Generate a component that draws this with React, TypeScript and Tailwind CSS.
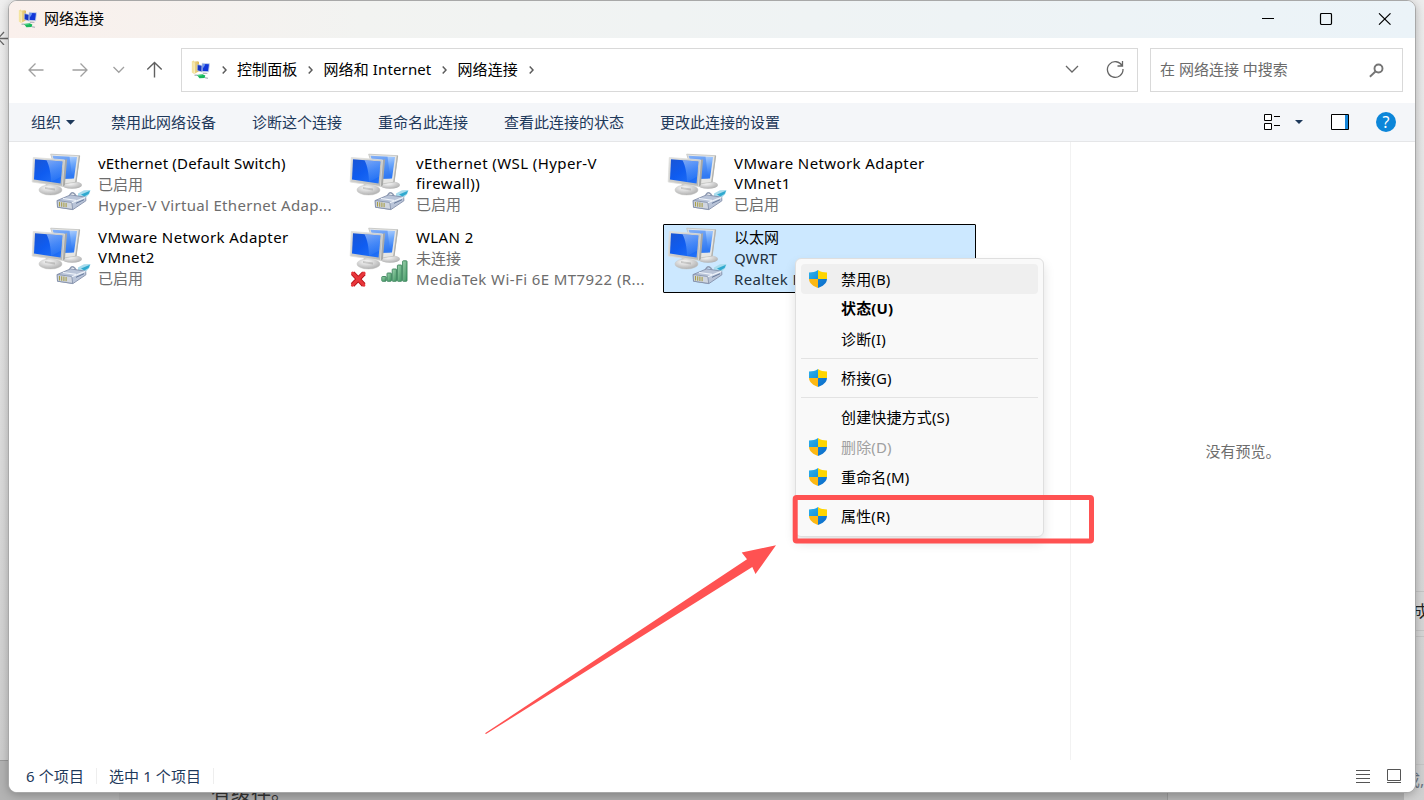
import React from 'react';
import { clsx } from 'clsx';

interface Connection {
  name: string[];
  status: string;
  device?: string;
  wireless?: boolean;
  selected?: boolean;
}

const CONNECTIONS: Connection[] = [
  { name: ['vEthernet (Default Switch)'], status: '已启用', device: 'Hyper-V Virtual Ethernet Adap...' },
  { name: ['vEthernet (WSL (Hyper-V', 'firewall))'], status: '已启用' },
  { name: ['VMware Network Adapter', 'VMnet1'], status: '已启用' },
  { name: ['VMware Network Adapter', 'VMnet2'], status: '已启用' },
  { name: ['WLAN 2'], status: '未连接', device: 'MediaTek Wi-Fi 6E MT7922 (R...', wireless: true },
  { name: ['以太网'], status: 'QWRT', device: 'Realtek P', selected: true },
];

const COMMANDS = ['禁用此网络设备', '诊断这个连接', '重命名此连接', '查看此连接的状态', '更改此连接的设置'];

const CRUMBS = ['控制面板', '网络和 Internet', '网络连接'];

interface MenuEntry {
  label: string;
  shield?: boolean;
  bold?: boolean;
  disabled?: boolean;
  hovered?: boolean;
}

const MENU_GROUPS: MenuEntry[][] = [
  [
    { label: '禁用(B)', shield: true, hovered: true },
    { label: '状态(U)', bold: true },
    { label: '诊断(I)' },
  ],
  [{ label: '桥接(G)', shield: true }],
  [
    { label: '创建快捷方式(S)' },
    { label: '删除(D)', shield: true, disabled: true },
    { label: '重命名(M)', shield: true },
  ],
  [{ label: '属性(R)', shield: true }],
];

// Shared gradients, referenced by id from every icon
const IconDefs: React.FC = () => (
  <svg className="absolute h-0 w-0" aria-hidden="true">
    <defs>
      <linearGradient id="screen" x1="0" y1="0" x2="1" y2="1">
        <stop offset="0" stopColor="#1a55d4" />
        <stop offset="0.45" stopColor="#0f5cf0" />
        <stop offset="1" stopColor="#2474f8" />
      </linearGradient>
      <linearGradient id="glare" x1="0" y1="0" x2="0.3" y2="1">
        <stop offset="0" stopColor="#d5e8ff" />
        <stop offset="0.55" stopColor="#6fa8fb" />
        <stop offset="1" stopColor="#2f7af5" />
      </linearGradient>
      <linearGradient id="bezel" x1="0" y1="0" x2="1" y2="1">
        <stop offset="0" stopColor="#e2e2e0" />
        <stop offset="1" stopColor="#b4b5b3" />
      </linearGradient>
      <radialGradient id="base" cx="0.4" cy="0.3" r="0.8">
        <stop offset="0" stopColor="#fafafa" />
        <stop offset="1" stopColor="#a6a6a6" />
      </radialGradient>
      <linearGradient id="bars" x1="0" y1="0" x2="1" y2="1">
        <stop offset="0" stopColor="#9fd3ae" />
        <stop offset="1" stopColor="#3c9460" />
      </linearGradient>
      <linearGradient id="blueTop" x1="0" y1="0" x2="1" y2="1">
        <stop offset="0" stopColor="#2fb0ec" />
        <stop offset="1" stopColor="#1493dc" />
      </linearGradient>
      <linearGradient id="blueBottom" x1="0" y1="0" x2="1" y2="1">
        <stop offset="0" stopColor="#1683d8" />
        <stop offset="1" stopColor="#0a6cc8" />
      </linearGradient>
      <linearGradient id="folder" x1="0" y1="0" x2="1" y2="0">
        <stop offset="0" stopColor="#f7e9a8" />
        <stop offset="1" stopColor="#dcb95a" />
      </linearGradient>
    </defs>
  </svg>
);

const NetworkFolderIcon: React.FC = () => (
  <svg className="h-5 w-5 shrink-0" viewBox="0 0 20 20">
    <path d="M.8 1.2 3 .6v1l4.2-.4.8 1v9L3.2 14 .8 12.6z" fill="url(#folder)" />
    <path d="M3 2.4 3.3 13.6" stroke="#fdf5cc" strokeWidth="1" />
    <path d="m6.3 4.6 5.2.9-.3 6.6-5-1.6z" fill="#1637c5" stroke="#cfd6e0" strokeWidth=".7" />
    <path d="m11.2 3.3 7.3.5-.9 8-6.6-.4z" fill="#1136d8" stroke="#cdd9e8" strokeWidth=".9" />
    <path d="m12 4.1 2.4.2-2.2 4z" fill="#6f9cf5" />
    <path d="m11.500 12.500 4 .2 1.500 1.200-5 .2z" fill="#b9bcc0" />
    <path d="M3.500 15.300h3M14 17.600l3 .8" stroke="#b4bcc0" strokeWidth="1.500" />
    <path d="m6 15.100 5.500-.9 2.800 1.400-.7 2.300-5.200.3z" fill="#18b85c" />
    <path d="m7 15.300 4.200-.5" stroke="#7be2a2" strokeWidth=".8" />
  </svg>
);

const ComputersIcon: React.FC<{ wireless?: boolean }> = ({ wireless }) => (
  <svg className="h-16 w-[62px] shrink-0" viewBox="0 0 62 64">
    {/* rear monitor */}
    <ellipse cx="42" cy="34" rx="10" ry="3.800" fill="url(#base)" />
    <path d="m20.700 3.200 28.800 1.500-3.600 26.500L30 33.500z" fill="#e6e6e4" stroke="#bfc0be" strokeWidth=".8" />
    <path d="m22.500 4.800 24.500 1.300-3 21.300-14 .6z" fill="url(#glare)" />
    <path d="m22.500 4.800 17 .9 2.800 21.700-12 .6z" fill="#347af0" opacity=".5" />
    <path d="m49.500 4.700-3.600 26.500" stroke="#b2b2ae" strokeWidth="1.300" />
    {/* front monitor */}
    <path d="M16 32h10l1 7H15z" fill="#bcbcba" />
    <ellipse cx="20.500" cy="38.900" rx="11.600" ry="5.200" fill="url(#base)" stroke="#c4c4c2" strokeWidth=".4" />
    <path d="m15 36 10 1.500v2L15 38z" fill="#8f8f8d" opacity=".4" />
    <path d="m34.500 9 2.600-1-2.200 26.200-2.600 1.500z" fill="#a8a9a7" />
    <path d="m3.300 6.500 31.200 2.400-2.100 26.500L2.200 31z" fill="url(#bezel)" stroke="#dededc" strokeWidth=".8" />
    <path d="M5 8.300 32.400 10.600 30.600 32.600 4 28.600z" fill="url(#screen)" />
    <path d="m16.500 9.300 15.900 1.300-1.300 15.200L21 31.100C21 24 19.600 15 16.500 9.300z" fill="url(#glare)" opacity=".55" />
    {wireless ? (
      <>
        <g fill="url(#bars)" stroke="#39825a" strokeWidth=".9">
          <rect x="33.800" y="51.500" width="4.400" height="4.800" rx=".7" />
          <rect x="39" y="48" width="4.400" height="8.300" rx=".7" />
          <rect x="44.200" y="44" width="4.400" height="12.300" rx=".7" />
          <rect x="49.400" y="40" width="4.400" height="16.300" rx=".7" />
          <rect x="54.600" y="35.800" width="4.400" height="20.500" rx=".7" />
        </g>
        <path d="M4.700 48.200 15.800 60M16 48.200 4.500 60" stroke="#b51218" strokeWidth="4.800" />
        <path d="M4.700 48.200 15.800 60M16 48.200 4.500 60" stroke="#e8363b" strokeWidth="3.200" strokeLinecap="round" />
      </>
    ) : (
      <>
        <path d="M39 46c2-6 5-5 7-1" fill="none" stroke="#8f9bb2" strokeWidth="1.400" />
        <path d="m48 42.500 6-3.200 6.500-.2-1.200 4-5.300 5.400-6-1z" fill="#a9dced" />
        <path d="m51 43.500 9-3.800-1.400 3.400-4.300 2.400z" fill="#2fa9cf" />
        <path d="m27.200 49.500 13.300-5.600 15.200 2.300.2 3.600-13 8.800-15.400-2.400z" fill="#b9c4d8" stroke="#8390aa" strokeWidth=".9" />
        <path d="m27.200 49.500 14.600 2 .9 6.900-15.200-2.200z" fill="#d0d6e0" stroke="#7684a0" strokeWidth=".7" />
        <path d="m41.800 51.800 13.600-5.400M33 47.500l13 1.800" stroke="#eef3fa" strokeWidth="1.200" />
        <path d="M29.500 51v4.500M31.700 51.300v4.500M33.900 51.600v4.500M36.100 52v4.200" stroke="#a89e4a" strokeWidth="1.100" />
        <path d="m46 52.300 8-3.600" stroke="#65789a" strokeWidth="1" />
      </>
    )}
  </svg>
);

const ShieldIcon: React.FC = () => (
  <svg className="h-[18px] w-[18px]" viewBox="0 0 18 18">
    <path d="M9 0C6.500 1.900 3.500 2.400 0 2.400V9h9z" fill="url(#blueTop)" />
    <path d="M9 0c2.500 1.900 5.500 2.400 9 2.400V9H9z" fill="#ffd500" />
    <path d="M0 9c.3 4.700 4.500 7.300 9 9V9z" fill="#fdb813" />
    <path d="M18 9c-.3 4.700-4.500 7.300-9 9V9z" fill="url(#blueBottom)" />
  </svg>
);

const CrumbArrow: React.FC = () => (
  <svg className="h-2 w-[5px]" viewBox="0 0 5 8" fill="none" stroke="#5c5c5c" strokeWidth="1.500">
    <path d="m.7.6 3.300 3.400L.7 7.400" />
  </svg>
);

const TitleBar: React.FC = () => (
  <div className="flex h-[37px] shrink-0 items-center bg-linear-to-r from-[#faf0ec] via-[#f2f3f1] via-25% to-[#ebf3f8] pb-[2px] pl-[9px] pr-6">
    <NetworkFolderIcon />
    <span className="ml-1.5 pb-[2px] text-black">网络连接</span>
    <svg className="ml-auto h-3 w-[130px]" viewBox="0 0 130 12" fill="none" stroke="#000" strokeWidth="1.100">
      <path d="M1 5.500h12" />
      <rect x="59.500" y=".5" width="11" height="11" rx="1.200" strokeWidth="1.200" />
      <path d="m118 .3 11.500 11.400M129.500.3 118 11.700" />
    </svg>
  </div>
);

const NavigationBar: React.FC = () => (
  <div className="flex h-[65px] shrink-0 items-center bg-white pb-[2px] pr-3">
    <svg className="h-5 w-[172px] shrink-0" viewBox="0 0 172 20" fill="none" stroke="#a0a0a0" strokeWidth="1.300">
      <path d="M34.500 10H20M26.500 3.500 20 10l6.500 6.500" />
      <path d="M63.500 10H78M71.500 3.500 78 10l-6.500 6.500" />
      <path d="m104.500 7 5.300 5.300L115 7" />
      <path d="M145.500 17.500v-15M138.300 9.500l7.200-7 7.200 7" stroke="#606060" strokeWidth="1.400" />
    </svg>
    <div className="flex h-11 w-[957px] shrink-0 items-center border border-[#d9d9d9] pl-[9px] pr-3 text-black">
      <NetworkFolderIcon />
      <span className="ml-[11px]"><CrumbArrow /></span>
      {CRUMBS.map(crumb => (
        <React.Fragment key={crumb}>
          <span className="ml-[10px] mr-[11px] pb-[2px] tracking-[0.12px] whitespace-nowrap">{crumb}</span>
          <CrumbArrow />
        </React.Fragment>
      ))}
      <svg className="ml-auto mb-[2px] h-5 w-[60px]" viewBox="0 0 60 20" fill="none" stroke="#666" strokeWidth="1.300">
        <path d="m1 7 6 6 6-6" />
        <path d="M57.200 6.500A7.800 7.800 0 1 0 58 9.500M57.500 1.500v5h-5" transform="translate(0 .5)" />
      </svg>
    </div>
    <div className="ml-3 flex h-11 w-[253px] items-center justify-between border border-[#d9d9d9] pl-[9px] pr-[18px] text-[#6b6b6b]">
      <span className="pb-[2px]">在 网络连接 中搜索</span>
      <svg className="mt-px h-[15px] w-[15px]" viewBox="0 0 15 15" fill="none" stroke="#757575" strokeWidth="1.900">
        <circle cx="9.500" cy="5.500" r="4" />
        <path d="m6.700 8.300-5.800 5.500" />
      </svg>
    </div>
  </div>
);

const CommandBar: React.FC = () => (
  <div className="flex h-[39px] shrink-0 items-center gap-9 border-b border-[#e5e6e8] bg-[#f4f6f9] pl-[22px] pr-[19px] text-[#1e395b]">
    <span className="flex items-center gap-[5px]">
      组织
      <svg className="h-[5px] w-[9px]" viewBox="0 0 9 5"><path d="M0 0h9L4.500 4.800z" fill="#1e395b" /></svg>
    </span>
    {COMMANDS.map(command => (
      <span key={command}>{command}</span>
    ))}
    <div className="ml-auto flex items-center">
      <svg className="h-4 w-4" viewBox="0 0 16 16" fill="#fff" stroke="#000">
        <path d="M.5.500h7v6h-7zM.5 9.500h7v6h-7zM10 2.500h6M10 11.500h6" />
      </svg>
      <svg className="ml-[15px] h-1 w-2" viewBox="0 0 8 4"><path d="M0 0h8L4 4z" fill="#1e395b" /></svg>
      <svg className="ml-7 h-4 w-[18px]" viewBox="0 0 18 16">
        <path d="M.5.500h17v15H.5z" fill="#fff" stroke="#000" />
        <path d="M14 1h3v14h-3z" fill="#1686d9" />
      </svg>
      <span className="ml-[27px] flex h-5 w-5 items-center justify-center rounded-full bg-[#0c86d9] text-[16px] leading-5 text-white">?</span>
    </div>
  </div>
);

const ConnectionTile: React.FC<{ connection: Connection }> = ({ connection }) => {
  const { name, status, device, wireless, selected } = connection;

  return (
    <div
      className={clsx(
        'flex h-[69px] w-[313px] border pl-[2px]',
        selected ? 'rounded-[1px] border-black bg-[#cce8ff] text-[#243240]' : 'border-transparent text-[#6d6d6d]'
      )}
    >
      <ComputersIcon wireless={wireless} />
      <div className="ml-[6px] min-w-0 pt-[2px] whitespace-nowrap">
        {name.map(line => (
          <div
            key={line}
            className={clsx(
              'leading-5 text-black',
              line.includes('Default') ? 'tracking-[0.2px]' : !selected && 'tracking-[0.4px]'
            )}
          >
            {line}
          </div>
        ))}
        <div className="pt-px leading-5">{status}</div>
        {device && (
          <div className={clsx('pt-px leading-5', wireless ? 'tracking-[0.42px]' : 'tracking-[0.32px]')}>{device}</div>
        )}
      </div>
    </div>
  );
};

const ContextMenu: React.FC = () => (
  <div className="absolute left-[795px] top-[258px] w-[249px] rounded-[6px] border border-[#dfdfdf] bg-[#f9f9f9] p-[5px] text-black shadow-[0_6px_12px_rgba(0,0,0,0.12)]">
    {MENU_GROUPS.map((group, index) => (
      <React.Fragment key={group[0].label}>
        {index > 0 && (
          <div className={clsx('my-1 h-px', index < MENU_GROUPS.length - 1 ? 'bg-[#e3e3e3]' : 'bg-[#eeeeee]')} />
        )}
        {group.map(entry => (
          <div
            key={entry.label}
            className={clsx(
              'flex h-[30px] items-center rounded-[4px] pl-2 tracking-[0.15px]',
              entry.hovered && 'bg-[#efefef]',
              entry.bold && 'pb-[2px] font-bold',
              entry.disabled && 'text-[#a0a0a0]'
            )}
          >
            <span className="mr-[14px] w-[18px]">{entry.shield && <ShieldIcon />}</span>
            {entry.label}
          </div>
        ))}
      </React.Fragment>
    ))}
  </div>
);

const StatusBar: React.FC = () => (
  <div className="flex h-8 shrink-0 items-center bg-white pl-[17px] pr-[14px] text-[#1e395b]">
    <span className="tracking-[0.1px]">6 个项目</span>
    <span className="ml-3 h-4 w-px bg-[#eeeeee]" />
    <span className="ml-3 tracking-[0.1px]">选中 1 个项目</span>
    <span className="ml-3 h-4 w-px bg-[#eeeeee]" />
    <svg className="ml-auto h-[14px] w-[46px]" viewBox="0 0 46 14" fill="none" stroke="#555">
      <path d="M1 1.500h14M1 5.500h14M1 9.500h14M1 13.500h14" />
      <path d="M32.500.500h13v11h-13zM32 13.500h14" />
    </svg>
  </div>
);

// Parts of the page that stay visible around the window
const Backdrop: React.FC = () => (
  <div className="absolute inset-0 overflow-hidden bg-linear-to-b from-[#efefef] via-[#dedede] to-[#cccccc]">
    <div className="absolute bottom-0 left-0 h-10 w-full border-t border-[#999] bg-[#b3b3b3]" />
    <div className="absolute bottom-0 left-[119px] h-5 w-[1049px] border-r border-[#999] bg-[#ababab]" />
    <div className="absolute right-0 top-0 h-full w-5 bg-linear-to-b from-[#ededed] via-[#dedede] to-[#d0d0d0]" />
    <svg className="absolute left-0 top-[31px] h-[14px] w-[10px]" viewBox="0 0 10 14" fill="none" stroke="#666" strokeWidth="1.300">
      <path d="M10 7.500H0M4 1 -2 7.500 4 14" />
    </svg>
    <div className="absolute right-0 top-[591px] h-[40px] w-5 border-y border-[#c5c5c5]" />
    <div className="absolute right-0 top-[636px] h-[129px] w-5 border-y border-[#c5c5c5]" />
    <span className="absolute left-[1413px] top-[601px] text-[16px] text-[#222]">成</span>
    <span className="absolute left-[1404px] top-[770px] whitespace-nowrap text-[16px] text-[#6c7480]">成,</span>
    <span className="absolute left-[211px] top-[783px] text-[20px] text-[#333]">有缓存。</span>
  </div>
);

const Annotation: React.FC = () => (
  <svg className="pointer-events-none absolute left-0 top-0 h-[800px] w-[1424px]" viewBox="0 0 1424 800">
    <rect x="795.200" y="497.500" width="296.300" height="43.500" rx="1.500" fill="none" stroke="#ff5252" strokeWidth="5" />
    <path d="m485 733.300 262-174-5.300-6.900L776 545.300l-20.500 28.800-3.200-7L486 734z" fill="#ff5252" />
  </svg>
);

const App: React.FC = () => (
  <div className="relative h-[800px] w-[1424px] overflow-hidden pl-2 font-['Noto_Sans','Noto_Sans_CJK_SC',sans-serif] text-[15px] leading-5">
    <IconDefs />
    <Backdrop />
    <div className="relative flex h-[793px] w-[1408px] flex-col overflow-hidden rounded-[9px] border border-[#a8a8a8] bg-white shadow-[0_2px_10px_rgba(0,0,0,0.25)]">
      <TitleBar />
      <NavigationBar />
      <CommandBar />
      <div className="flex min-h-0 flex-1">
        <div className="w-[1061px] pl-[18px] pt-2">
          <div className="grid w-[949px] grid-cols-3 gap-[5px]">
            {CONNECTIONS.map(connection => (
              <ConnectionTile key={connection.name.join(' ')} connection={connection} />
            ))}
          </div>
        </div>
        <div className="flex flex-1 items-center justify-center border-l border-[#f2f2f2] text-[#6d6d6d]">
          没有预览。
        </div>
      </div>
      <StatusBar />
    </div>
    <ContextMenu />
    <Annotation />
  </div>
);

export default App;
